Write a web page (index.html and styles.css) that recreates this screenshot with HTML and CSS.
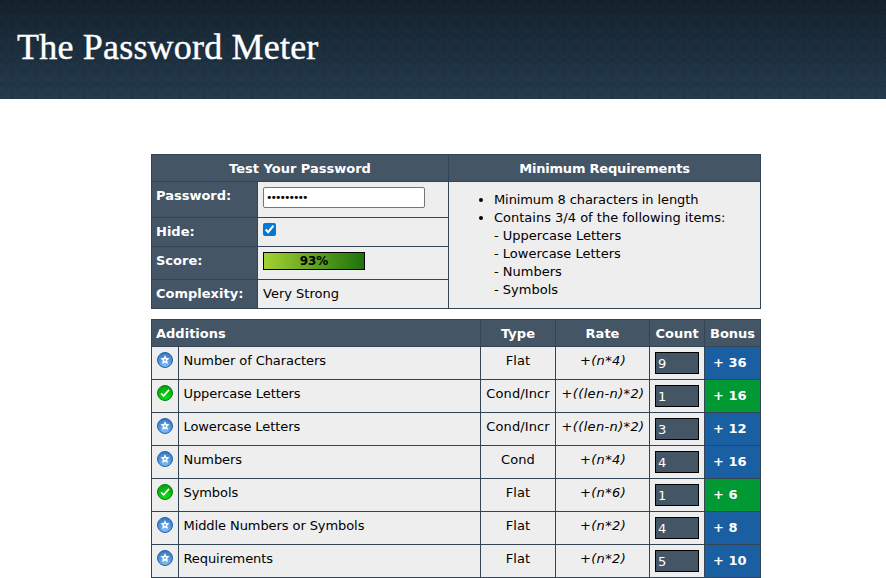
FILE: index.html
```html
<!DOCTYPE html>
<html lang="en">
<head>
<meta charset="utf-8">
<title>The Password Meter</title>
<link rel="stylesheet" href="styles.css">
</head>
<body>
<svg class="defs" aria-hidden="true">
  <defs>
    <radialGradient id="blue" cx="50%" cy="85%" r="85%"><stop offset="0" stop-color="#7cc0f8"/><stop offset="1" stop-color="#3474c4"/></radialGradient>
    <radialGradient id="green" cx="50%" cy="80%" r="80%"><stop offset="0" stop-color="#12dc12"/><stop offset="1" stop-color="#04a010"/></radialGradient>
    <symbol id="star" viewBox="0 0 16 16"><circle cx="8" cy="8" r="7.5" fill="url(#blue)" stroke="#2860a8"/><path d="M8 3l1.3 2.9 3.3.4-2.4 2.2.7 3.5L8 10.4 5.1 12l.7-3.5-2.4-2.2 3.3-.4z" fill="#fff"/><circle cx="8" cy="8" r="1" fill="#5b9ee4"/></symbol>
    <symbol id="check" viewBox="0 0 16 16"><circle cx="8" cy="8" r="7.5" fill="url(#green)" stroke="#087c14"/><path d="M4 8.4l2.6 2.4 5.4-5.9" fill="none" stroke="#fff" stroke-width="1.6"/></symbol>
  </defs>
</svg>
<header class="banner">
  <svg class="texture" aria-hidden="true">
    <pattern id="scroll" width="24" height="24" patternUnits="userSpaceOnUse"><path d="M0 0q6 2 6 6t6 6q6-2 6-6t6-6M0 24q6-2 6-6t6-6q6 2 6 6t6 6M12 0q-4 4 0 7q4-3 0-7M12 24q-4-4 0-7q4 3 0 7M0 12q4-4 7 0q-3 4-7 0M24 12q-4-4-7 0q3 4 7 0" fill="none" stroke="#000"/></pattern>
    <rect width="100%" height="100%" fill="url(#scroll)"/>
  </svg>
  <h1>The Password Meter</h1>
</header>
<main class="content">
  <table class="grid test">
    <colgroup><col class="c-label"><col class="c-field"><col class="c-req"></colgroup>
    <tr class="head"><th colspan="2">Test Your Password</th><th class="req-head">Minimum Requirements</th></tr>
    <tr class="r-password"><th>Password:</th><td><input class="password" type="password" value="aB3$5678x"></td>
      <td class="req" rowspan="4"><ul><li class="first">Minimum 8 characters in length</li><li>Contains 3/4 of the following items:<br>- Uppercase Letters<br>- Lowercase Letters<br>- Numbers<br>- Symbols</li></ul></td></tr>
    <tr class="r-hide"><th>Hide:</th><td><input class="hide" type="checkbox" checked></td></tr>
    <tr class="r-score"><th>Score:</th><td><div class="score">93%</div></td></tr>
    <tr class="r-complexity"><th>Complexity:</th><td>Very Strong</td></tr>
  </table>
  <table class="grid additions">
    <colgroup><col class="c-icon"><col class="c-name"><col class="c-type"><col class="c-rate"><col class="c-count"><col class="c-bonus"></colgroup>
    <tr class="head"><th class="left" colspan="2">Additions</th><th>Type</th><th>Rate</th><th>Count</th><th>Bonus</th></tr>
    <tr><td class="icon"><svg><use href="#star"/></svg></td><td class="name">Number of Characters</td><td class="mid">Flat</td><td class="rate">+(n*4)</td><td class="count"><div>9</div></td><td class="bonus">+ 36</td></tr>
    <tr><td class="icon"><svg><use href="#check"/></svg></td><td class="name">Uppercase Letters</td><td class="mid">Cond/Incr</td><td class="rate">+((len-n)*2)</td><td class="count"><div>1</div></td><td class="bonus pass">+ 16</td></tr>
    <tr><td class="icon"><svg><use href="#star"/></svg></td><td class="name">Lowercase Letters</td><td class="mid">Cond/Incr</td><td class="rate">+((len-n)*2)</td><td class="count"><div>3</div></td><td class="bonus">+ 12</td></tr>
    <tr><td class="icon"><svg><use href="#star"/></svg></td><td class="name">Numbers</td><td class="mid">Cond</td><td class="rate">+(n*4)</td><td class="count"><div>4</div></td><td class="bonus">+ 16</td></tr>
    <tr><td class="icon"><svg><use href="#check"/></svg></td><td class="name">Symbols</td><td class="mid">Flat</td><td class="rate">+(n*6)</td><td class="count"><div>1</div></td><td class="bonus pass">+ 6</td></tr>
    <tr><td class="icon"><svg><use href="#star"/></svg></td><td class="name">Middle Numbers or Symbols</td><td class="mid">Flat</td><td class="rate">+(n*2)</td><td class="count"><div>4</div></td><td class="bonus">+ 8</td></tr>
    <tr><td class="icon"><svg><use href="#star"/></svg></td><td class="name">Requirements</td><td class="mid">Flat</td><td class="rate">+(n*2)</td><td class="count"><div>5</div></td><td class="bonus">+ 10</td></tr>
  </table>
</main>
</body>
</html>
```
FILE: styles.css
```css
* { box-sizing: border-box; }
body { margin: 0; background: #fff; color: #000; font: 13px/18px Verdana, "DejaVu Sans", sans-serif; overflow: hidden; }
.defs { display: block; width: 0; height: 0; }
.banner { position: relative; height: 99px; padding: 26px 17px 0; background: linear-gradient(#15232e, #253c4f); }
.texture { position: absolute; inset: 0; width: 100%; height: 100%; opacity: .12; }
.banner h1 { position: relative; margin: 0; color: #fff; font: 36px/42px Georgia, "Liberation Serif", serif; letter-spacing: .2px; -webkit-text-stroke: .4px #fff; white-space: nowrap; }
.content { width: 610px; margin: 55px 0 0 151px; }
.grid { width: 610px; table-layout: fixed; border-collapse: separate; border-spacing: 1px; background: #345; }
.grid + .grid { margin-top: 10px; }
th, td { padding: 5px 4px 0; vertical-align: top; white-space: nowrap; }
th { background: #456; color: #fff; font-weight: bold; text-align: left; }
td { background: #eee; }
.head { height: 26px; }
.head th { padding: 2px 4px 0; text-align: center; vertical-align: middle; }
.head .left { text-align: left; }
.head .req-head { letter-spacing: -.2px; }
.c-label { width: 105px; }
.c-field { width: 190px; }
.c-req { width: 311px; }
.r-password { height: 35px; }
.r-hide { height: 28px; }
.r-score { height: 32px; }
.r-complexity { height: 28px; }
.test td { padding-left: 5px; }
.password { display: block; width: 162px; height: 21px; margin: 0; padding: 1px 2px; border: 1px solid #767676; border-radius: 2px; font: 11px "DejaVu Sans", sans-serif; letter-spacing: -2px; }
.hide { display: block; width: 13px; height: 13px; margin: 0; accent-color: #0078d7; }
.score { width: 102px; height: 18px; border: 1px solid #000; background: linear-gradient(90deg, #a2d232, #1f730b); font-weight: bold; font-size: 12px; line-height: 16px; text-align: center; }
.test .req { padding: 9px 4px 0 5px; }
.req ul { margin: 0; padding-left: 40px; }
.req .first { letter-spacing: -.1px; }
.c-icon { width: 26px; }
.c-name { width: 301px; }
.c-type { width: 74px; }
.c-rate { width: 93px; }
.c-count { width: 54px; }
.c-bonus { width: 55px; }
.additions tr { height: 32px; }
.additions .head { height: 26px; }
.additions .icon, .additions .count { padding-left: 5px; }
.icon svg { display: block; width: 16px; height: 16px; }
.name { padding-left: 4.5px; letter-spacing: -.08px; }
.mid { text-align: center; letter-spacing: .1px; }
.rate { padding-left: 5px; text-align: center; font-style: italic; letter-spacing: .35px; }
.count div { width: 44px; height: 22px; padding: 1px 2px; border: 1px solid #000; background: #456; color: #fff; line-height: 20px; }
.bonus { padding: 7px 8px 0; background: #1b5fa3; color: #fff; font-weight: bold; }
.bonus.pass { background: #093; }
```
